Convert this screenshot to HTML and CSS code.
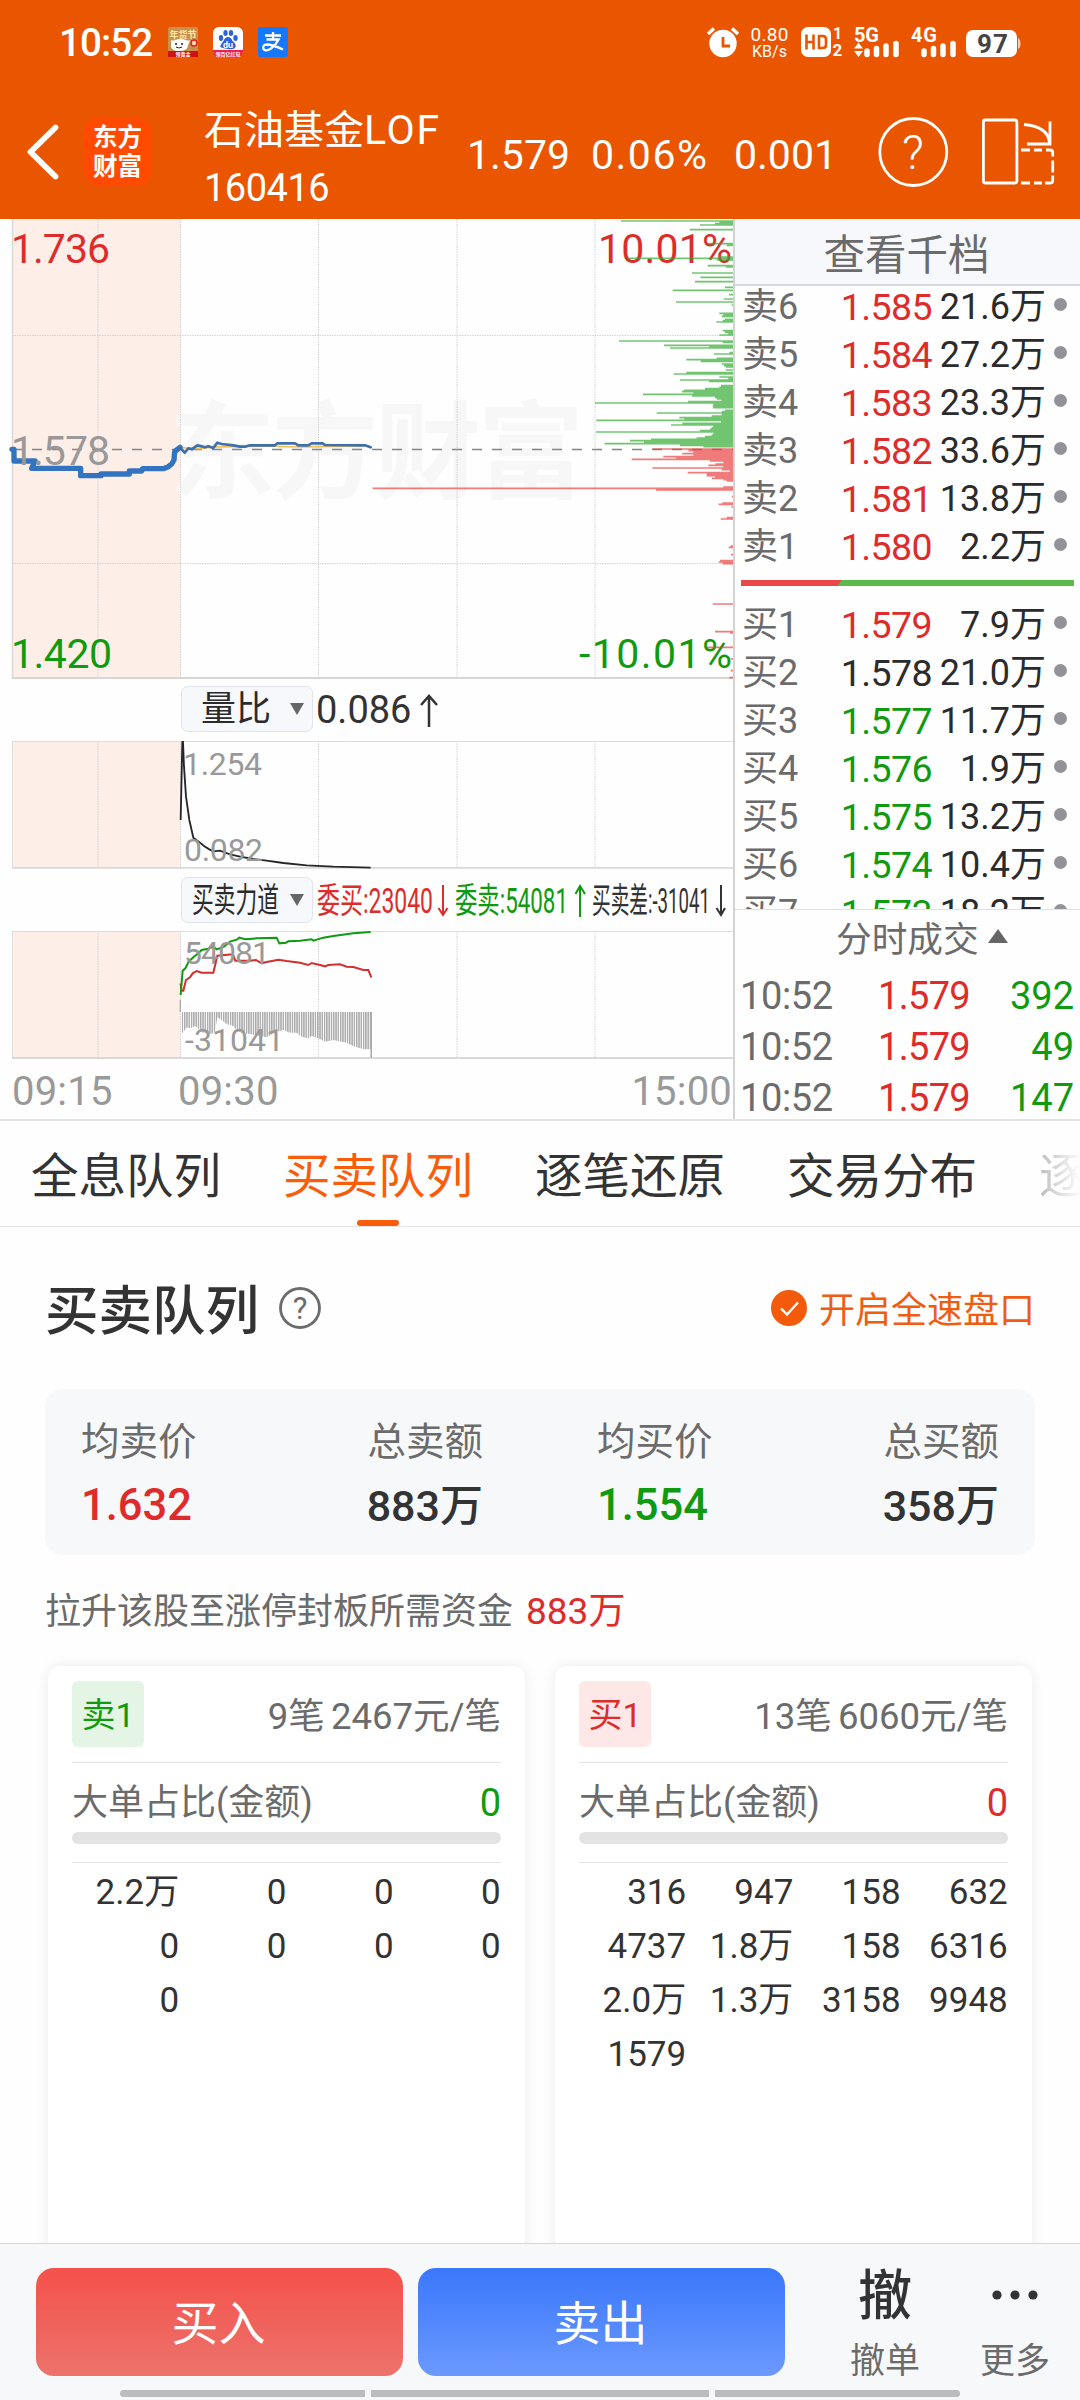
FILE: index.html
```html
<!DOCTYPE html>
<html lang="zh-CN">
<head>
<meta charset="utf-8">
<title>石油基金LOF 160416</title>
<link rel="stylesheet" href="styles.css">
</head>
<body>
<div class="app">
<header class="top">
  <div class="status">
    <span class="clock">10:52</span>
    <svg class="app-icon" width="30" height="30" viewBox="0 0 30 30"><rect width="30" height="30" rx="2" fill="#c8904f"/><rect y="24" width="30" height="6" fill="#cf1212"/><text x="15" y="11" font-size="9" font-weight="700" fill="#ffe9a0" text-anchor="middle">年货节</text><path d="M3 13q2 1 4 0q6-2 11 0q2 1 4 0q-1 4-2 5q0 6-9 6q-8 0-8-5z" fill="#fff"/><circle cx="8" cy="17" r="1" fill="#222"/><circle cx="14" cy="17" r="1" fill="#222"/><path d="M8 20q3 2 6 0" stroke="#222" fill="none"/><circle cx="26" cy="16" r="3" fill="#ffd9b0" stroke="#d22" stroke-width="1.5"/><text x="15" y="29" font-size="5" font-weight="700" fill="#fff" text-anchor="middle">领黄金</text></svg>
    <svg class="app-icon" width="30" height="30" viewBox="0 0 30 30"><rect width="30" height="30" rx="6" fill="#fff"/><path d="M0 23H30V24Q30 30 24 30H6Q0 30 0 24Z" fill="#ee1f4b"/><g fill="#2b62d9"><ellipse cx="8" cy="11" rx="2.200" ry="3"/><ellipse cx="12.500" cy="6" rx="2.200" ry="3"/><ellipse cx="18" cy="6" rx="2.200" ry="3"/><ellipse cx="22.500" cy="11" rx="2.200" ry="3"/><path d="M15 10q3 0 4.500 4q4 3 3 6t-7.500 2t-7.500-2t3-6q1.500-4 4.500-4z"/></g><text x="15" y="20.500" font-size="9" font-weight="700" fill="#fff" text-anchor="middle">du</text><text x="15" y="29" font-size="5" font-weight="700" fill="#fff" text-anchor="middle">领百亿红包</text></svg>
    <svg class="app-icon" width="30" height="30" viewBox="0 0 30 30"><rect width="30" height="30" rx="2" fill="#1677ff"/><path d="M7 8.500H23M15 5V12.500M8.500 12.500H20.500Q18 18 13 21.500T5.500 22Q4 18 9 17.500Q14 17.500 25 22.500" fill="none" stroke="#fff" stroke-width="2.300"/></svg>
    <svg class="indicators" width="320" height="40" viewBox="704 22 320 40">
      <g fill="#fff"><circle cx="723" cy="43.500" r="13.700"/><path d="M708 34L714 28.500M738 34L732 28.500" stroke="#fff" stroke-width="3.500"/></g>
      <path d="M723 37V46H730" fill="none" stroke="#ea5500" stroke-width="2.800"/>
      <g fill="#fff">
      <text x="750.500" y="41" font-size="19" textLength="38">0.80</text><text x="752" y="56.500" font-size="16" textLength="35">KB/s</text>
      <rect x="801" y="27" width="30" height="30" rx="7"/><text x="833" y="39" font-size="16" font-weight="700">1</text><text x="832.500" y="56" font-size="17" font-weight="700">2</text>
      <text x="854" y="42" font-size="20" font-weight="700" textLength="25">5G</text><text x="911" y="42" font-size="20" font-weight="700" textLength="26">4G</text>
      <path d="M858.500 42.500L863 48.500H854ZM858.500 57L854 51H863Z"/>
      <path d="M867 51V54.500M876.500 48.500V54.500M886 46V54.500M896 43.500V54.500M924 51V54.500M933.500 48.500V54.500M943 46V54.500M953 43.500V54.500" stroke="#fff" stroke-width="5.500" stroke-linecap="round"/>
      <rect x="966" y="30" width="51" height="27" rx="7"/><path d="M1018 38Q1020.500 39 1020.500 43.500T1018 49Z" opacity=".7"/></g>
      <path d="M806.500 34.500V49.500M813.500 34.500V49.500M806.500 42H813.500M819 36H822.500Q826 36 826 39V45Q826 48 822.500 48H819Z" fill="none" stroke="#ea5500" stroke-width="2.600"/>
      <text x="977" y="53" font-size="26" font-weight="700" fill="#444" textLength="31">97</text>
    </svg>
  </div>
  <div class="nav">
    <svg width="84" height="70" viewBox="0 116.500 84 70"><path d="M55.500 127L30.500 151.500L55.500 176" fill="none" stroke="#fff" stroke-width="5.800" stroke-linecap="round" stroke-linejoin="round"/></svg>
    <div class="brand">东方<br>财富</div>
    <div class="title">石油基金<em>LOF</em><br><span>160416</span></div>
    <b>1.579</b><b class="pct">0.06%</b><b>0.001</b>
    <svg width="105" height="72" viewBox="877 115.500 105 72"><circle cx="913.300" cy="151.500" r="33.500" fill="none" stroke="#fff" stroke-width="2.800"/><text x="913" y="168" font-size="48" font-weight="300" fill="#fff" text-anchor="middle">?</text></svg>
    <svg width="80" height="72" viewBox="980 115.500 80 72" fill="none" stroke="#fff" stroke-width="2.800"><rect x="983.400" y="119.500" width="33.500" height="63" rx="2"/><path d="M1024 124Q1048 126 1049.500 142M1050 121V143.500H1027"/><path d="M1021 149.500H1030M1034 149.500H1042M1046 149.500H1050Q1052.700 149.500 1052.700 152V156M1052.700 160V172M1052.700 175V180Q1052.700 182.500 1050 182.500H1045M1042 182.500H1034M1030 182.500H1021"/></svg>
  </div>
</header>
<section class="quote">
  <div class="charts">
    <svg width="734" height="460" viewBox="0 219 734 460">
      <rect x="12" y="219" width="168.500" height="459" fill="#fdeee7"/>
      <text class="mark" x="169" y="490" font-size="106" font-weight="700" fill="#f7f7f7" textLength="415">东方财富</text>
      <path d="M98 219V677M180.500 219V677M318.500 219V677M457 219V677M595 219V677M12 335.500H733M12 563.500H733" stroke="#d3d3d3" stroke-width="1" stroke-dasharray="1.500 1"/>
      <path d="M12.500 219V678" stroke="#d9d9d9" stroke-width="1.500"/><path d="M12 678H733" stroke="#d6d6d6" stroke-width="2"/>
      <path d="M12 449.500H733" stroke="#858585" stroke-width="1.500" stroke-dasharray="10 10"/>
      <g transform="translate(0 210) scale(.33333)" fill="none" stroke-linejoin="round" stroke-linecap="round">
        <path d="M540 712L560 714L600 716L640 711L690 710L800 708L900 711L980 709L1095 708" stroke="#f3bd52" stroke-width="5"/>
        <path d="M36 718L42 718V753H105L95 775H242V797H303V792H388V783H425L428 776H490L505 770L515 762L522 750L524 725L540 712" stroke="#3274c0" stroke-width="16"/>
        <path d="M540 712L554 728L565 715L575 718L592 706L605 709L615 712L625 709L640 714L652 698L665 702L700 706L720 710L735 710L750 706H825L832 700H885L895 706H925L935 700H968L975 705L1095 706L1112 712" stroke="#3d70ac" stroke-width="8"/>
      </g>
      <g font-size="41">
        <text x="11" y="465" fill="#999" textLength="99">1.578</text>
        <text x="11" y="263" fill="#dd2c2c" textLength="99">1.736</text>
        <text x="11" y="668" fill="#109a10" textLength="101">1.420</text>
        <text x="598" y="263" fill="#dd2c2c" textLength="134">10.01%</text>
        <text x="579" y="668" fill="#109a10" textLength="153">-10.01%</text>
      </g>
      <g transform="translate(360 210) scale(.33333)" fill="none" stroke-width="5">
        <path stroke="#34ac34" stroke-opacity=".7" d="M783 33H1119M1078 37H1119M1065 41H1119M1020 45H1119M989 59H1119M1045 101H1119M1100 106H1119M805 145H1119M1078 141H1119M1070 150H1119M1043 167H1119M1098 171H1119M996 189H1119M1021 202H1119M1005 215H1119M1095 232H1119M938 241H1119M1107 254H1119M1091 267H1119M948 276H1119M1115 285H1119M1078 310H1119M1090 315H1119M1085 319H1119M1095 328H1119M1088 332H1119M1069 336H1119M1088 362H1119M1095 367H1119M1105 371H1119M1078 375H1119M777 393H1119M1088 397H1119M912 406H1119M1047 410H1119M930 414H1119M1108 428H1119M1062 432H1119M1070 445H1119M979 449H1119M1022 454H1119M1085 462H1119M1092 467H1119M1097 471H1119M1097 480H1119M979 488H1119M941 492H1119M1078 501H1119M1105 506H1119M960 510H1119M1047 514H1119M1083 527H1119M1078 532H1119M1035 536H1119M971 541H1119M966 545H1119M1000 549H1119M849 553H1119M996 558H1119M1065 562H1119M1070 567H1119M1085 571H1119M984 575H1119M705 579H1119M1060 584H1119M1058 588H1119M1059 593H1119M1095 601H1119M1085 605H1119M890 609H1119M1085 614H1119M1055 618H1119M958 623H1119M973 627H1119M709 631H1119M1083 636H1119M967 640H1119M933 645H1119M1060 649H1119M1055 653H1119M1050 658H1119M1020 662H1119M708 666H1119M1060 671H1119M1055 675H1119M1035 680H1119M1010 684H1119M873 688H1119M810 692H1119M852 697H1119M734 701H1119M960 706H1119M1030 710H1119"/>
        <path stroke="#e83c3c" stroke-opacity=".68" d="M878 717H1119M985 722H1119M1000 727H1119M967 731H1119M1000 735H1119M910 740H1119M948 744H1119M815 748H1119M1050 753H1119M1090 757H1119M1066 762H1119M1045 766H1119M1090 770H1119M877 774H1119M1085 779H1119M1110 783H1119M983 788H1119M1040 792H1119M1040 797H1119M1065 801H1119M1056 805H1119M1090 809H1119M1100 813H1119M1090 831H1119M38 835H1119M888 840H1119M1116 860H1119M1087 879H1119M1076 883H1119M1114 891H1119M1100 923H1119M1082 927H1119M1112 1008H1119M1106 1012H1119M1113 1034H1119M1080 1052H1119M1076 1056H1119M1088 1061H1119M1058 1182H1119M1065 1265H1119M1110 1269H1119M1040 1312H1119M1112 1347H1119M1112 1382H1119M1108 1403H1119"/>
      </g>
    </svg>
    <div class="tool">
      <div class="select"><span>量比</span><i></i></div>
      <span class="ratio">0.086</span>
      <svg width="20" height="34" viewBox="0 0 20 34"><path d="M10 33V3M2 11L10 2L18 11" fill="none" stroke="#333" stroke-width="2.500"/></svg>
    </div>
    <svg width="734" height="128" viewBox="0 741 734 128">
      <rect x="12" y="741" width="168.500" height="127" fill="#fdeee7"/>
      <path d="M98 741V867M180.500 741V867M318.500 741V867M457 741V867M595 741V867" stroke="#d3d3d3" stroke-dasharray="1.500 1"/>
      <path d="M12.500 741V868M12 741.500H733" stroke="#ddd"/><path d="M12 867.800H733" stroke="#d9d9d9" stroke-width="1.800"/>
      <path transform="translate(0 670) scale(.33333)" d="M542 450L547 216H549L552 290L558 380L568 450L580 503L600 518L612 528L628 538L640 544L660 542L690 553L720 560L760 567L800 572L850 579L920 586L1000 590L1112 593" fill="none" stroke="#262626" stroke-width="5.500"/>
      <g font-size="32" fill="#999"><text x="183" y="774.500" textLength="79">1.254</text><text x="184" y="861" textLength="79">0.082</text></g>
    </svg>
    <div class="tool second">
      <div class="select narrow"><svg width="88" height="46"><text x="0" y="34.500" font-size="34" fill="#2b2b2b" textLength="87" lengthAdjust="spacingAndGlyphs">买卖力道</text></svg><i></i></div>
      <svg width="420" height="46" viewBox="313 877 420 46" font-size="35">
        <text x="317" y="912.500" fill="#dd2c2c" textLength="116" lengthAdjust="spacingAndGlyphs">委买:23040</text>
        <text x="455" y="912.500" fill="#109a10" textLength="113" lengthAdjust="spacingAndGlyphs">委卖:54081</text>
        <text x="592" y="912.500" fill="#333" textLength="118" lengthAdjust="spacingAndGlyphs">买卖差:-31041</text>
        <g fill="none" stroke-width="2"><path stroke="#dd2c2c" d="M443 885V915M438.500 908L443 915L447.500 908"/><path stroke="#109a10" d="M580 917V887M575.500 894L580 886L585 894"/><path stroke="#333" d="M721 885V915M716.500 908L721 915L725 908"/></g>
      </svg>
    </div>
    <svg width="734" height="128" viewBox="0 931 734 128">
      <defs><pattern id="bars" width="6.880" height="20" patternUnits="userSpaceOnUse" x="545"><rect width="4.400" height="20" fill="#aaa"/></pattern></defs>
      <rect x="12" y="931" width="168.500" height="127" fill="#fdeee7"/>
      <path d="M98 931V1057M180.500 931V1057M318.500 931V1057M457 931V1057M595 931V1057" stroke="#d3d3d3" stroke-dasharray="1.500 1"/>
      <path d="M12.500 931V1058M12 931.500H733" stroke="#ddd"/><path d="M12 1058H733" stroke="#d9d9d9" stroke-width="1.800"/>
      <g transform="translate(0 670) scale(.33333)" fill="none" stroke-width="6">
        <path stroke="none" fill="url(#bars)" d="M545 1026H1116V1163H1112V1138H1090L1060 1128L1040 1118L1000 1110L975 1115L955 1105L935 1098L925 1105L905 1100L890 1088H870L850 1080L830 1085L800 1102L780 1098L750 1092L725 1090L710 1080L700 1068L680 1062L665 1050L652 1042L645 1085L635 1092L620 1090L605 1087L592 1073L585 1068L570 1075L562 1072L556 1078L548 1088H545Z"/>
        <path d="M541 990V1026M1114 1026V1163" stroke="#aaa" stroke-width="4"/>
        <path stroke="#d22f2f" d="M542 940L544 962H550L558 930L570 922L578 910L590 903L605 908H640L652 857L698 853L706 872H750L768 870L785 880L800 876L820 872L835 869L860 873L900 878L925 885L935 879L960 885L975 889L985 885L1020 883L1040 890L1060 891L1090 900H1105L1114 922"/>
        <path stroke="#109a10" d="M542 975L548 902L556 895L566 875L580 862L595 850L605 840L625 836L640 830L650 838L672 830L690 815L712 808L718 803L735 808L770 805L830 803L838 820L858 818L865 814L900 812L935 808L940 812L970 803L1000 798L1060 790L1112 786"/>
      </g>
      <g font-size="32" fill="#999"><text x="184" y="964" textLength="86">54081</text><text x="185" y="1050.500" textLength="99">-31041</text></g>
    </svg>
    <div class="times"><span>09:15</span><span>09:30</span><span>15:00</span></div>
  </div>
  <aside class="book">
    <div class="book-head">查看千档</div>
    <div class="levels">
      <div class="lv"><span>卖6</span><em class="r">1.585</em><b>21.6万</b><i></i></div>
      <div class="lv"><span>卖5</span><em class="r">1.584</em><b>27.2万</b><i></i></div>
      <div class="lv"><span>卖4</span><em class="r">1.583</em><b>23.3万</b><i></i></div>
      <div class="lv"><span>卖3</span><em class="r">1.582</em><b>33.6万</b><i></i></div>
      <div class="lv"><span>卖2</span><em class="r">1.581</em><b>13.8万</b><i></i></div>
      <div class="lv"><span>卖1</span><em class="r">1.580</em><b>2.2万</b><i></i></div>
      <div class="split"></div>
      <div class="lv"><span>买1</span><em class="r">1.579</em><b>7.9万</b><i></i></div>
      <div class="lv"><span>买2</span><em>1.578</em><b>21.0万</b><i></i></div>
      <div class="lv"><span>买3</span><em class="g">1.577</em><b>11.7万</b><i></i></div>
      <div class="lv"><span>买4</span><em class="g">1.576</em><b>1.9万</b><i></i></div>
      <div class="lv"><span>买5</span><em class="g">1.575</em><b>13.2万</b><i></i></div>
      <div class="lv"><span>买6</span><em class="g">1.574</em><b>10.4万</b><i></i></div>
      <div class="lv"><span>买7</span><em class="g">1.573</em><b>18.2万</b><i></i></div>
    </div>
    <div class="trades-head">分时成交<i></i></div>
    <div class="tr"><span>10:52</span><em>1.579</em><b>392</b></div>
    <div class="tr"><span>10:52</span><em>1.579</em><b>49</b></div>
    <div class="tr"><span>10:52</span><em>1.579</em><b>147</b></div>
  </aside>
</section>
<nav class="tabs"><span>全息队列</span><span class="on">买卖队列</span><span>逐笔还原</span><span>交易分布</span><span class="cut">逐</span></nav>
<main class="queue">
  <div class="heading"><h2>买卖队列</h2>
    <svg width="44" height="44" viewBox="0 0 44 44"><circle cx="22" cy="22" r="19.500" fill="none" stroke="#6b6b6b" stroke-width="2.800"/><text x="22" y="32.500" font-size="31" fill="#6b6b6b" text-anchor="middle">?</text></svg>
    <div class="fast"><svg width="36" height="36" viewBox="0 0 36 36"><circle cx="18" cy="18" r="18" fill="#f45a0c"/><path d="M10 18.500L16 24.500L27 12.500" fill="none" stroke="#fff" stroke-width="2.400"/></svg><span>开启全速盘口</span></div>
  </div>
  <div class="stats">
    <div><span>均卖价</span><b class="r">1.632</b></div>
    <div class="end"><span>总卖额</span><b>883万</b></div>
    <div class="mid"><span>均买价</span><b class="g">1.554</b></div>
    <div class="end"><span>总买额</span><b>358万</b></div>
  </div>
  <p class="note">拉升该股至涨停封板所需资金<em>883万</em></p>
  <div class="cards">
    <section class="card">
      <div class="card-top"><span class="badge sell">卖1</span><span>9笔<s></s>2467元/笔</span></div>
      <div class="big"><span>大单占比(金额)</span><b class="g">0</b></div>
      <div class="track"></div>
      <div class="nums"><span>2.2万</span><span>0</span><span>0</span><span>0</span><span>0</span><span>0</span><span>0</span><span>0</span><span>0</span></div>
    </section>
    <section class="card">
      <div class="card-top"><span class="badge buy">买1</span><span>13笔<s></s>6060元/笔</span></div>
      <div class="big"><span>大单占比(金额)</span><b class="r">0</b></div>
      <div class="track"></div>
      <div class="nums"><span>316</span><span>947</span><span>158</span><span>632</span><span>4737</span><span>1.8万</span><span>158</span><span>6316</span><span>2.0万</span><span>1.3万</span><span>3158</span><span>9948</span><span>1579</span></div>
    </section>
  </div>
</main>
<footer class="bottom">
  <div class="actions">
    <button class="buy-btn">买入</button><button class="sell-btn">卖出</button>
    <div class="act"><strong>撤</strong><span>撤单</span></div>
    <div class="act more"><strong><svg width="50" height="12" viewBox="0 0 50 12" fill="#333"><circle cx="7" cy="6" r="4.600"/><circle cx="25" cy="6" r="4.600"/><circle cx="43" cy="6" r="4.600"/></svg></strong><span>更多</span></div>
  </div>
  <div class="home"><i></i><i></i><i></i></div>
</footer>
</div>
</body>
</html>
```
FILE: styles.css
```css
* { box-sizing: border-box; }
body { margin: 0; font-family: Roboto, "Noto Sans CJK SC", sans-serif; color: #333; background: #fefefe; }
b, em, i, s, h2, p { font-style: normal; font-weight: 400; margin: 0; text-decoration: none; }
svg { display: block; flex: none; overflow: visible; }
.app { width: 1080px; height: 2400px; overflow: hidden; display: flex; flex-direction: column; }
.r { color: #de2b2b; }
.g { color: #0f9a0f; }

.top { height: 219px; flex: none; background: #ea5500; color: #fff; }
.status { height: 84px; display: flex; align-items: center; padding: 0 56px 0 59px; }
.clock { font-size: 38.500px; width: 109px; letter-spacing: -.9px; font-weight: 500; }
.app-icon { margin-right: 15px; }
.indicators { margin-left: auto; }
.nav { height: 135px; display: grid; grid-template-columns: 84px 120px 263px 124px 143px 143px 103px 1fr; align-items: center; font-size: 41px; line-height: 60px; }
.nav b { position: relative; top: 3px; }
.nav .pct { letter-spacing: 1.500px; }
.brand { width: 67px; height: 68px; border-radius: 14px; background: #ff4a00; font-size: 24.500px; font-weight: 700; line-height: 29px; text-align: center; padding-top: 5px; }
.title { font-size: 40px; line-height: 57px; align-self: start; padding-top: 18px; white-space: nowrap; }
.title em { font-size: 41px; letter-spacing: 1.800px; }
.title span { font-size: 38px; letter-spacing: -.5px; }

.quote { height: 902px; flex: none; display: flex; border-bottom: 2px solid #e4e4e4; }
.charts { width: 733px; flex: none; display: flex; flex-direction: column; }
.tool { height: 62px; flex: none; padding: 7px 0 0 181px; display: flex; }
.second { padding-top: 8px; }
.select { width: 132px; height: 46px; border: 1.500px solid #e1e4ea; border-radius: 7px; background: #f7f8fb; display: flex; align-items: center; justify-content: space-between; padding: 0 8px 0 19px; font-size: 35px; line-height: 49px; color: #2b2b2b; }
.narrow { padding-left: 10px; }
.select i { width: 0; border: 7.500px solid transparent; border-top: 12px solid #666; border-bottom: 0; }
.ratio { font-size: 38px; line-height: 49px; margin: 0 6px 0 3px; width: 97px; }
.tool > svg { margin-top: 8px; }
.second > svg { margin-top: 0; }
.times { height: 61px; flex: none; display: flex; color: #999; font-size: 40px; line-height: 66px; padding-left: 12px; padding-right: 1px; letter-spacing: .2px; }
.times span:first-child { width: 166px; }
.times span:last-child { margin-left: auto; }

.book { flex: 1; border-left: 2px solid #d3d3d3; }
.book-head { height: 67px; background: #f7f8fb; border-bottom: 2px solid #d6d8e0; color: #6b6b6b; font-size: 41.500px; line-height: 74px; text-align: center; padding-right: 2px; }
.levels { height: 624px; overflow: hidden; border-bottom: 1.500px solid #e1e1e1; }
.lv { height: 48px; line-height: 48px; display: grid; grid-template-columns: 78px 112px 114px 1fr; padding-left: 7px; position: relative; top: -3px; font-size: 36px; color: #2b2b2b; white-space: nowrap; }
.lv em { font-size: 37.500px; letter-spacing: -.6px; text-align: right; }
.lv span { color: #6b6b6b; }
.lv b { text-align: right; font-size: 36px; }
.lv i { width: 13px; height: 13px; border-radius: 50%; background: #929299; margin: 15px 0 0 8px; }
.lv em.r { color: #de2b2b; }
.lv em.g { color: #0f9a0f; }
.split { height: 6px; margin: 6px 6px 18px 6px; background: linear-gradient(130deg, #ea4848 0 77px, #5cba48 78px); }
.trades-head { height: 61px; line-height: 61px; padding-left: 101px; color: #6b6b6b; font-size: 35.700px; display: flex; }
.trades-head i { width: 0; height: 0; border: 10.500px solid transparent; border-bottom: 14px solid #666; border-top: 0; margin: 19px 0 0 9px; }
.tr { height: 51px; line-height: 51px; display: grid; grid-template-columns: 100px 130px 1fr; padding: 0 6px 0 5px; font-size: 38px; }
.tr span { color: #6b6b6b; letter-spacing: -.4px; }
.tr em { color: #de2b2b; text-align: right; letter-spacing: -.7px; }
.tr b { color: #0f9a0f; text-align: right; }

.tabs { height: 106px; flex: none; border-bottom: 1.500px solid #e3e3e3; display: flex; gap: 62px; padding: 4px 0 0 31px; font-size: 47.500px; line-height: 105px; white-space: nowrap; overflow: hidden; }
.tabs .on { color: #f95c0a; position: relative; }
.tabs .on::after { content: ""; position: absolute; width: 42px; height: 6px; border-radius: 3px; background: #f95c0a; left: 74px; top: 95px; }
.cut { background: linear-gradient(90deg, #bbb, #fff 42px); background-clip: text; color: transparent; }

.queue { height: 1016px; flex: none; overflow: hidden; }
.heading { height: 162px; padding: 0 45px; display: flex; align-items: center; }
.heading h2 { font-size: 53.500px; font-weight: 500; line-height: 80px; margin-right: 19px; position: relative; top: 4px; }
.fast { margin-left: auto; display: flex; align-items: center; gap: 12px; color: #f05c12; font-size: 36px; line-height: 50px; }
.fast span { position: relative; top: 3px; }
.stats { height: 166px; margin: 0 45px; border-radius: 18px; background: #f7f8fa; padding: 20px 36px; display: grid; grid-template-columns: 210px 192px 300px 1fr; }
.stats div { display: flex; flex-direction: column; line-height: 66px; }
.stats span { font-size: 38.500px; color: #6b6b6b; }
.stats b { font-size: 43.500px; font-weight: 500; line-height: 62px; }
.stats .end { align-items: flex-end; }
.stats .end b { font-size: 43px; }
.stats .mid { padding-left: 114px; }
.note { height: 111px; line-height: 114px; padding-left: 45px; font-size: 36px; color: #6b6b6b; }
.note em { color: #de2b2b; margin-left: 13px; font-size: 37px; }
.cards { display: flex; gap: 30px; padding: 0 48px; }
.card { flex: 1; height: 640px; border-radius: 12px; background: #fff; box-shadow: 0 0 14px rgba(0,0,0,.08); padding: 15px 24px 0 24px; }
.card-top { height: 82px; display: flex; justify-content: space-between; border-bottom: 1px solid #e3e3e3; font-size: 36.500px; line-height: 71px; color: #6b6b6b; }
.card-top s { display: inline-block; width: 6px; }
.badge { width: 72px; height: 66px; border-radius: 6px; font-size: 34px; line-height: 69px; text-align: center; }
.sell { background: #e4f5e5; color: #0f9a0f; }
.buy { background: #fde7e7; color: #de2b2b; }
.big { height: 69px; display: flex; justify-content: space-between; line-height: 80px; font-size: 36px; color: #6b6b6b; }
.big b { font-size: 38px; }
.big b.g { color: #0f9a0f; }
.track { height: 12px; border-radius: 6px; background: #e3e3e3; margin-bottom: 18px; }
.nums { border-top: 1px solid #e3e3e3; padding-top: 3px; display: grid; grid-template-columns: repeat(4, 107.200px); font-size: 35px; line-height: 54px; text-align: right; }

.bottom { height: 157px; flex: none; background: #f7f8fa; border-top: 1.500px solid #d5d8dd; }
.actions { height: 146px; display: flex; padding: 24px 0 0 36px; }
.actions button { width: 367px; height: 108px; border: 0; border-radius: 18px; color: #fff; font: 47px/108px Roboto, "Noto Sans CJK SC", sans-serif; margin-right: 15px; padding: 2px 2px 0 0; }
.actions .buy-btn { background: linear-gradient(#f4514a, #ec736c); }
.actions .sell-btn { background: linear-gradient(#3a77fb, #6b99ff); }
.act { width: 70px; margin-left: 50px; display: flex; flex-direction: column; align-items: center; font-size: 35px; line-height: 47px; color: #6b6b6b; }
.act strong { font-size: 54px; font-weight: 500; line-height: 58px; height: 70px; color: #333; }
.more { margin-left: 60px; }
.more svg { margin-top: 21px; }
.home { display: flex; gap: 6px; padding: 0 120px; }
.home i { height: 7px; background: #bbbcbe; width: 245px; border-radius: 4px 0 0 4px; }
.home i:nth-child(2) { width: 338px; border-radius: 0; }
.home i:nth-child(3) { border-radius: 0 4px 4px 0; }
```
